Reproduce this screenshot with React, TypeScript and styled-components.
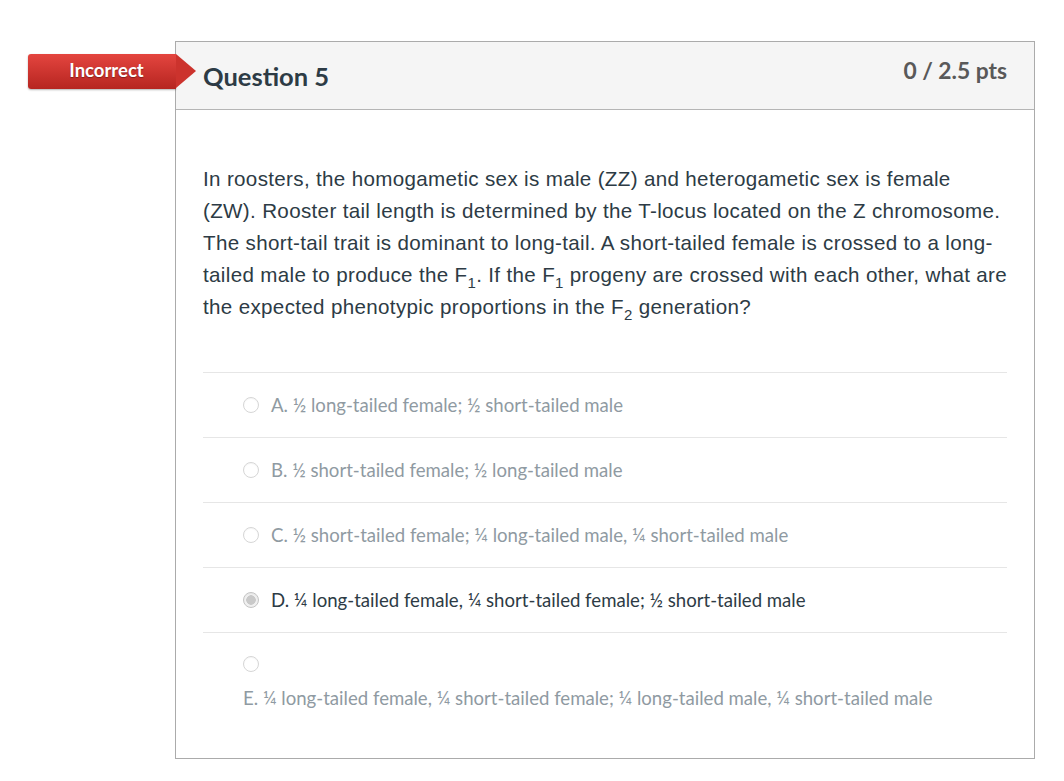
import styled, { createGlobalStyle } from "styled-components";

const GlobalStyle = createGlobalStyle`
  body {
    margin: 0;
    background: #ffffff;
    font-family: "Lato", "Liberation Sans", sans-serif;
  }
`;

const Page = styled.div`
  padding: 41px 29px 20px 175px;
`;

const Card = styled.div`
  position: relative;
  border: 1px solid #ababab;
  width: 858px;
`;

const Flag = styled.div`
  position: absolute;
  left: -148px;
  top: 12px;
  width: 148px;
  height: 35px;
  padding: 0 0 3px 9px;
  box-sizing: border-box;
  display: flex;
  align-items: center;
  justify-content: center;
  border-radius: 3px 0 0 3px;
  background: linear-gradient(#e4453f, #b62520);
  box-shadow: 0 1px 2px rgba(0, 0, 0, 0.3);
  color: #ffffff;
  font-size: 18.5px;
  font-weight: 700;
  text-shadow: 0 1px 1px rgba(0, 0, 0, 0.35);

  &::after {
    content: "";
    position: absolute;
    right: -20px;
    top: 0;
    border-style: solid;
    border-width: 17.5px 0 17.5px 20px;
    border-color: transparent transparent transparent #cc332d;
  }
`;

const Header = styled.div`
  height: 67px;
  display: flex;
  justify-content: space-between;
  align-items: flex-start;
  padding: 0 27px;
  background: #f5f5f5;
  border-bottom: 1px solid #b5b5b5;
`;

const Title = styled.h2`
  margin: 19px 0 0;
  font-size: 25.5px;
  font-weight: 700;
  color: #2d3b45;
`;

const Points = styled.div`
  margin-top: 14px;
  font-size: 22.8px;
  font-weight: 700;
  color: #595959;
`;

const Body = styled.div`
  padding: 53px 27px 28px;
`;

const Question = styled.p`
  margin: 0 0 49px;
  font-family: "Liberation Sans", Arial, sans-serif;
  font-size: 20.6px;
  letter-spacing: 0.33px;
  line-height: 32px;
  white-space: nowrap;
  color: #2d3b45;

  sub {
    font-size: 15px;
    line-height: 0;
    vertical-align: -6px;
  }
`;

const Answer = styled.div<{ $stacked?: boolean }>`
  display: flex;
  flex-direction: ${(p) => (p.$stacked ? "column" : "row")};
  align-items: ${(p) => (p.$stacked ? "flex-start" : "center")};
  gap: ${(p) => (p.$stacked ? "14px" : "12px")};
  padding: ${(p) => (p.$stacked ? "23px 40px 20px" : "20px 40px")};
  border-top: 1px solid #e6e6e6;
`;

const Radio = styled.span<{ $checked?: boolean }>`
  flex: none;
  width: 16px;
  height: 16px;
  box-sizing: border-box;
  border-radius: 50%;
  border: 1px solid ${(p) => (p.$checked ? "#c4c4c4" : "#d6d6d6")};
  background: ${(p) =>
    p.$checked
      ? "radial-gradient(circle, #c9c9c9 0 4.5px, #f0f0f0 5px)"
      : "#ffffff"};
  box-shadow: inset 0 1px 1px rgba(0, 0, 0, 0.04);
`;

const Label = styled.span<{ $chosen?: boolean }>`
  font-size: 18.6px;
  line-height: 24px;
  color: ${(p) => (p.$chosen ? "#2d3b45" : "#8f9aa2")};
`;

const answers = [
  { text: "A. ½ long-tailed female; ½ short-tailed male" },
  { text: "B. ½ short-tailed female; ½ long-tailed male" },
  { text: "C. ½ short-tailed female; ¼ long-tailed male, ¼ short-tailed male" },
  {
    text: "D. ¼ long-tailed female, ¼ short-tailed female; ½ short-tailed male",
    chosen: true,
  },
  {
    text: "E. ¼ long-tailed female, ¼ short-tailed female; ¼ long-tailed male, ¼ short-tailed male",
    stacked: true,
  },
];

export default function App() {
  return (
    <>
      <GlobalStyle />
      <Page>
        <Card>
          <Flag>Incorrect</Flag>
          <Header>
            <Title>Question 5</Title>
            <Points>0 / 2.5 pts</Points>
          </Header>
          <Body>
            <Question>
              In roosters, the homogametic sex is male (ZZ) and heterogametic
              sex is female
              <br />
              (ZW). Rooster tail length is determined by the T-locus located on
              the Z chromosome.
              <br />
              The short-tail trait is dominant to long-tail. A short-tailed
              female is crossed to a long-
              <br />
              tailed male to produce the F<sub>1</sub>. If the F<sub>1</sub>{" "}
              progeny are crossed with each other, what are
              <br />
              the expected phenotypic proportions in the F<sub>2</sub>{" "}
              generation?
            </Question>
            {answers.map((a) => (
              <Answer key={a.text} $stacked={a.stacked}>
                <Radio $checked={a.chosen} />
                <Label $chosen={a.chosen}>{a.text}</Label>
              </Answer>
            ))}
          </Body>
        </Card>
      </Page>
    </>
  );
}
